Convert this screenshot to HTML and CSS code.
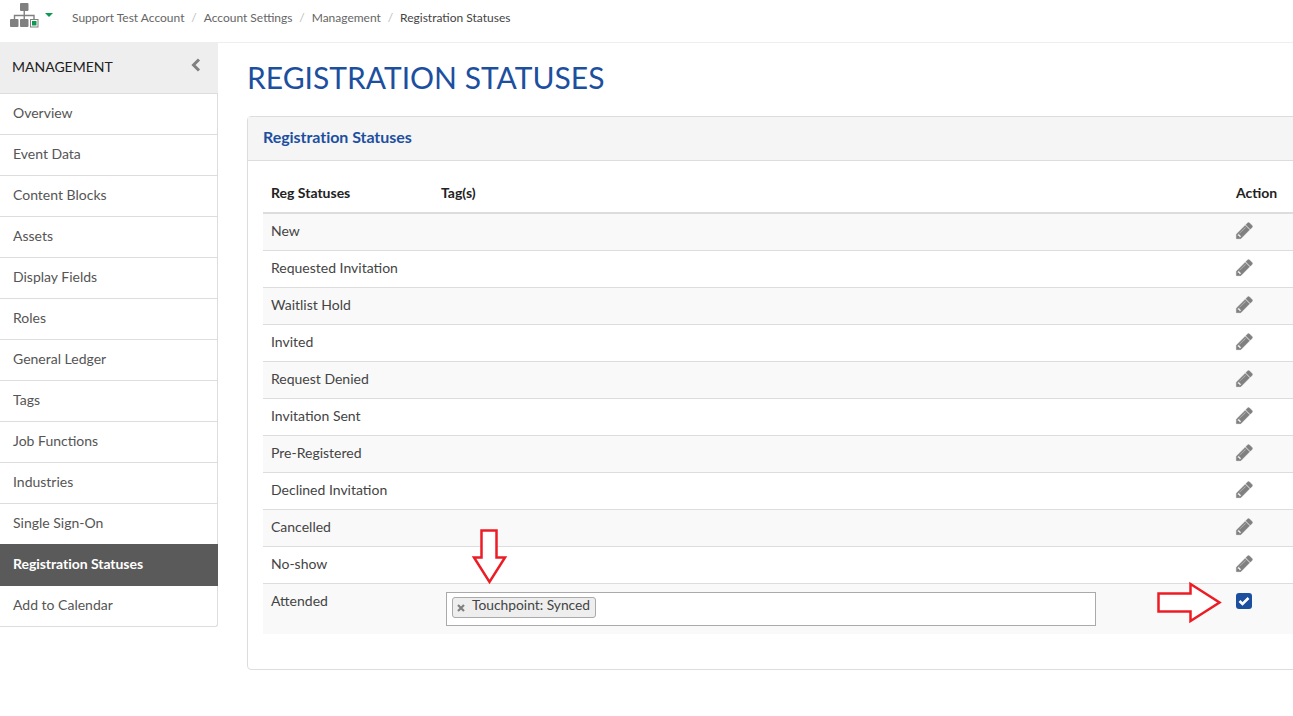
FILE: index.html
```html
<!DOCTYPE html>
<html lang="en">
<head>
<meta charset="utf-8">
<title>Registration Statuses</title>
<link rel="stylesheet" href="styles.css">
</head>
<body>
<svg class="sprite" width="0" height="0"><symbol id="pencil" viewBox="0 0 1792 1792"><path d="M491 1536l91-91-235-235-91 91v107h128v128h107zm523-928q0-22-22-22-10 0-17 7l-542 542q-7 7-7 17 0 22 22 22 10 0 17-7l542-542q7-7 7-17zm-54-192l416 416-832 832h-416v-416zm683 96q0 53-37 90l-166 166-416-416 166-165q36-38 90-38 53 0 91 38l235 234q37 39 37 91z"/></symbol></svg>
<header class="topbar">
  <svg class="org-icon" width="30" height="28" viewBox="0 0 30 28">
    <rect x="10" y="3" width="8.500" height="8" rx="1" fill="#808080"/>
    <path d="M14.250 11v8M4.500 19v-3.500h19.500V19" fill="none" stroke="#808080" stroke-width="1.400"/>
    <rect x="0" y="19" width="8.500" height="8" rx="1" fill="#808080"/>
    <rect x="10" y="19" width="8.500" height="8" rx="1" fill="#808080"/>
    <rect x="20.500" y="19.500" width="7.500" height="7.500" fill="#fff" stroke="#808080"/>
    <rect x="22" y="21" width="4.500" height="4.500" fill="#0a9a50"/>
  </svg>
  <span class="caret"></span>
  <nav class="crumbs">
    <span>Support Test Account</span><i>/</i>
    <span>Account Settings</span><i>/</i>
    <span>Management</span><i>/</i>
    <span class="current">Registration Statuses</span>
  </nav>
</header>
<div class="layout">
  <aside class="sidebar">
    <div class="side-head">
      <span>MANAGEMENT</span>
      <svg width="10" height="14" viewBox="0 0 10 14"><path d="M8 1.500 2.500 7 8 12.500" fill="none" stroke="#808080" stroke-width="3"/></svg>
    </div>
    <ul class="side-list">
      <li>Overview</li>
      <li>Event Data</li>
      <li>Content Blocks</li>
      <li>Assets</li>
      <li>Display Fields</li>
      <li>Roles</li>
      <li>General Ledger</li>
      <li>Tags</li>
      <li>Job Functions</li>
      <li>Industries</li>
      <li>Single Sign-On</li>
      <li class="active">Registration Statuses</li>
      <li>Add to Calendar</li>
    </ul>
  </aside>
  <main class="content">
    <h1>REGISTRATION STATUSES</h1>
    <section class="panel">
      <h2 class="panel-head">Registration Statuses</h2>
      <div class="panel-body">
        <table>
          <colgroup><col class="c1"><col class="c2"><col></colgroup>
          <thead><tr><th>Reg Statuses</th><th>Tag(s)</th><th>Action</th></tr></thead>
          <tbody>
            <tr><td>New</td><td></td><td><svg class="pencil"><use href="#pencil"/></svg></td></tr>
            <tr><td>Requested Invitation</td><td></td><td><svg class="pencil"><use href="#pencil"/></svg></td></tr>
            <tr><td>Waitlist Hold</td><td></td><td><svg class="pencil"><use href="#pencil"/></svg></td></tr>
            <tr><td>Invited</td><td></td><td><svg class="pencil"><use href="#pencil"/></svg></td></tr>
            <tr><td>Request Denied</td><td></td><td><svg class="pencil"><use href="#pencil"/></svg></td></tr>
            <tr><td>Invitation Sent</td><td></td><td><svg class="pencil"><use href="#pencil"/></svg></td></tr>
            <tr><td>Pre-Registered</td><td></td><td><svg class="pencil"><use href="#pencil"/></svg></td></tr>
            <tr><td>Declined Invitation</td><td></td><td><svg class="pencil"><use href="#pencil"/></svg></td></tr>
            <tr><td>Cancelled</td><td></td><td><svg class="pencil"><use href="#pencil"/></svg></td></tr>
            <tr><td>No-show</td><td></td><td><svg class="pencil"><use href="#pencil"/></svg></td></tr>
            <tr class="edit-row">
              <td>Attended</td>
              <td><div class="tag-input"><span class="chip"><svg class="chip-x" width="8" height="8" viewBox="0 0 8 8"><path d="M1 1 7 7M7 1 1 7" fill="none" stroke="#808080" stroke-width="2.200"/></svg>Touchpoint: Synced</span></div></td>
              <td><span class="check"><svg width="12" height="10" viewBox="0 0 12 10"><path d="M1.500 5 4.500 8 10.500 2" fill="none" stroke="#fff" stroke-width="2.600"/></svg></span></td>
            </tr>
          </tbody>
        </table>
      </div>
    </section>
  </main>
</div>
<svg class="arrow arrow-down" width="37" height="57" viewBox="0 0 37 57"><path d="M10.500 2.500H25.500V29.500H34L18.500 54 3 29.500H10.500z" fill="#fff" stroke="#ed1c24" stroke-width="2.500"/></svg>
<svg class="arrow arrow-right" width="66" height="43" viewBox="0 0 66 43"><path d="M2.500 12.500H34.500V3L63.500 21.500 34.500 40V30.500H2.500z" fill="#fff" stroke="#ed1c24" stroke-width="2.500"/></svg>
</body>
</html>
```
FILE: styles.css
```css
* { box-sizing: border-box; }
html, body { margin: 0; height: 100%; }
body {
  font-family: Lato, "Liberation Sans", sans-serif;
  font-size: 14px;
  line-height: 20px;
  color: #333;
  background: #fff;
  overflow: hidden;
  position: relative;
}
.sprite { position: absolute; }
.topbar {
  height: 43px;
  display: flex;
  align-items: flex-start;
  padding-left: 10px;
  border-bottom: 1px solid #eee;
}
.org-icon { flex: none; overflow: visible; }
.caret {
  flex: none;
  width: 0;
  height: 0;
  margin: 13px 0 0 5px;
  border-left: 4px solid transparent;
  border-right: 4px solid transparent;
  border-top: 4px solid #0a9a50;
}
.crumbs {
  margin: 8px 0 0 19px;
  font-size: 12px;
  color: #666;
  display: flex;
}
.crumbs i { font-style: normal; color: #bbb; margin: 0 6.900px; }
.crumbs .current { color: #444; }
.layout { display: flex; align-items: flex-start; }
.sidebar { flex: none; width: 218px; }
.side-head {
  height: 51px;
  background: #eee;
  border-bottom: 1px solid #ddd;
  display: flex;
  align-items: center;
  justify-content: space-between;
  padding: 0 17px 3px 12px;
  color: #222;
}
.side-head svg { margin-top: -3px; }
.side-list {
  list-style: none;
  margin: 0;
  padding: 0;
  border-right: 1px solid #ddd;
  border-bottom: 1px solid #ddd;
  border-bottom-right-radius: 3px;
}
.side-list li {
  height: 41px;
  padding: 9px 13px 0;
  border-bottom: 1px solid #ddd;
  color: #555;
}
.side-list li:last-child { height: 40px; border-bottom: 0; }
.side-list .active {
  height: 42px;
  margin: -1px -1px 0 0;
  padding-top: 10px;
  background: #5a5a5a;
  color: #fff;
  font-weight: 700;
  border-bottom: 0;
  letter-spacing: -0.050px;
}
.content { flex: none; padding-left: 29px; width: 1100px; }
h1 {
  margin: 14px 0 19px;
  font-size: 30px;
  line-height: 40px;
  font-weight: 400;
  color: #1d4f9f;
}
.panel {
  width: 1080px;
  border: 1px solid #ddd;
  border-radius: 4px;
}
.panel-head {
  margin: 0;
  height: 44px;
  padding: 10px 15px 0;
  font-size: 16px;
  line-height: 20px;
  font-weight: 700;
  letter-spacing: -0.050px;
  color: #1d4f9f;
  background: #f5f5f5;
  border-bottom: 1px solid #ddd;
}
.panel-body { padding: 12px 15px 35px; }
table { width: 100%; table-layout: fixed; border-collapse: separate; border-spacing: 0; }
.c1 { width: 170px; }
.c2 { width: 795px; }
th {
  text-align: left;
  padding: 10px 8px 9px;
  font-weight: 700;
  color: #222;
  border-bottom: 2px solid #ddd;
}
td {
  height: 37px;
  padding: 7px 8px 8px;
  border-bottom: 1px solid #ddd;
  vertical-align: top;
  color: #444;
}
tbody tr:nth-child(odd) td { background: #f9f9f9; }
.edit-row td { height: 49px; border-bottom: 0; }
.pencil {
  display: block;
  width: 19px;
  height: 19px;
  margin: 0 0 0 -1px;
  fill: #808080;
  stroke: #808080;
  stroke-width: 40px;
}
.tag-input {
  width: 650px;
  height: 34px;
  margin: 1px 0 0 5px;
  border: 1px solid #aaa;
  background: #fff;
  padding: 4px 5px;
}
.chip {
  display: inline-flex;
  align-items: center;
  height: 21px;
  padding: 0 5px 5px 4px;
  border: 1px solid #aaa;
  border-radius: 3px;
  background: #eee;
  font-size: 13.800px;
  color: #444;
}
.chip-x { flex: none; margin: 6px 7px 0 0; }
.check {
  display: flex;
  align-items: center;
  justify-content: center;
  width: 16px;
  height: 16px;
  margin-top: 2px;
  border-radius: 3px;
  background: #1d4f9f;
}
.arrow { position: absolute; overflow: visible; }
.arrow-down { left: 471px; top: 528px; }
.arrow-right { left: 1156px; top: 581px; }
```
